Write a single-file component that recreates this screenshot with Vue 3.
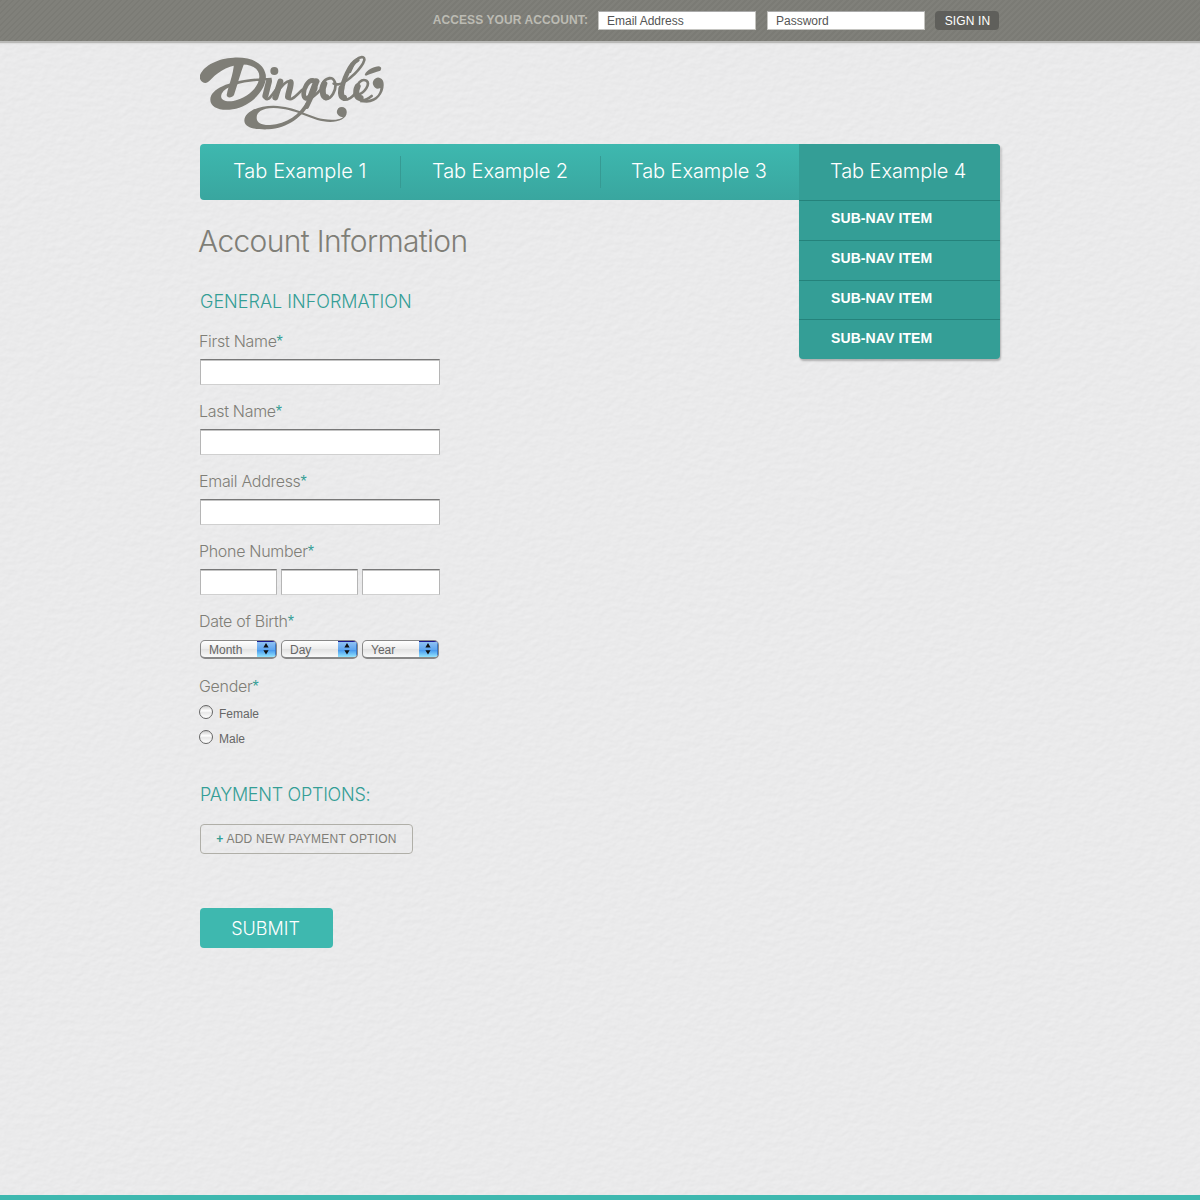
<script setup>
const tabs = ['Tab Example 1', 'Tab Example 2', 'Tab Example 3', 'Tab Example 4']
const subItems = [1, 2, 3, 4]
const fields = ['First Name', 'Last Name', 'Email Address']
const dates = ['Month', 'Day', 'Year']
const genders = ['Female', 'Male']
</script>

<template>
  <div class="page">
    <svg class="paper" width="1200" height="1200" aria-hidden="true">
      <filter id="grain" x="0" y="0" width="100%" height="100%" color-interpolation-filters="sRGB">
        <feTurbulence type="fractalNoise" baseFrequency="0.13 0.18" numOctaves="4" seed="8" result="n" />
        <feDiffuseLighting in="n" surfaceScale="0.15" diffuseConstant="1.02" lighting-color="#f0f0f1">
          <feDistantLight azimuth="240" elevation="73" />
        </feDiffuseLighting>
      </filter>
      <rect width="1200" height="1200" filter="url(#grain)" />
    </svg>

    <div class="topbar">
      <div class="wrap login">
        <span class="access">ACCESS YOUR ACCOUNT:</span>
        <div class="login-input">Email Address</div>
        <div class="login-input second">Password</div>
        <button class="signin">SIGN IN</button>
      </div>
    </div>

    <main class="wrap">
      <svg class="logo" viewBox="30 30 555 225" width="185" height="75" role="img" aria-label="Dingolé">
        <g fill="#7f7e77">
          <path d="M45 114C33 112 26 101 31 88C43 61 85 40 130 38C184 35 220 54 227 88C234 128 188 183 128 193C90 199 60 187 61 163C63 128 130 101 245 98L245 106C180 106 110 118 95 146C88 165 105 172 130 168C174 159 208 126 208 94C208 72 185 56 150 59C107 62 77 87 57 109Q50 115 45 114Z" />
          <path d="M132 54L163 54C151 85 142 122 132 150C127 158 111 161 110 150C116 120 130 90 132 54Z" />
          <circle cx="253" cy="78" r="12" />
          <path d="M469 194C478 224 437 236 400 229C350 220 320 192 250 189C216 190 200 200 200 219C200 233 215 241 240 240C290 236 330 210 352 164L364 168C340 215 292 250 235 253C203 254 164 251 163 227C163 203 200 182 250 182C320 184 350 213 400 222C432 228 455 222 460 215A15 15 0 1 1 469 194Z" />
          <path d="M524 90C529 75 552 64 567 64Q578 67 571 77C558 81 542 85 528 92Z" />
          <path d="M550 121A15 15 0 1 1 579 107C588 132 568 173 530 173L510 172L512 165C550 168 570 152 571 129Q557 136 550 121Z" />
        </g>
        <g fill="none" stroke="#7f7e77" stroke-linecap="round" stroke-linejoin="round">
          <path stroke-width="18" d="M237 109L226 153M271 110L256 157M302 112C304 122 295 142 294 155M379 109L362 153M454 130Q450 157 462 158M503 124C494 142 500 160 512 159M403 116C395 135 397 156 409 157" />
          <path stroke-width="14" d="M368 107C355 104 341 130 341 146C341 160 350 164 358 156M376 130L350 185M455 136C458 110 480 55 502 45" />
          <path stroke-width="8" d="M226 160C235 170 250 145 262 128M258 148C272 125 290 106 303 108M294 160C305 170 320 150 336 135M384 110C374 102 365 101 357 108M352 160Q370 150 380 118M358 163Q385 145 398 125M420 100C405 99 395 115 392 130M405 162C424 164 441 135 435 112Q430 98 418 99M431 116Q445 123 468 108C505 82 534 42 519 37C503 32 490 55 480 80M462 164Q480 165 496 145M503 150C525 143 542 116 529 107C514 99 500 118 498 132M510 165Q525 169 545 153" />
        </g>
      </svg>

      <nav class="nav">
        <div v-for="(t, i) in tabs" :key="t" class="tab" :class="{ active: i === 3 }">
          <span>{{ t }}</span>
          <ul v-if="i === 3" class="sub">
            <li v-for="s in subItems" :key="s">SUB-NAV ITEM</li>
          </ul>
        </div>
      </nav>

      <h1>Account Information</h1>
      <h2 class="general">GENERAL INFORMATION</h2>

      <div v-for="f in fields" :key="f" class="field">
        <label>{{ f }}<b>*</b></label>
        <div class="input"></div>
      </div>
      <div class="field">
        <label>Phone Number<b>*</b></label>
        <div class="row">
          <div class="input"></div><div class="input"></div><div class="input last"></div>
        </div>
      </div>
      <div class="field dob">
        <label>Date of Birth<b>*</b></label>
        <div class="row">
          <div v-for="d in dates" :key="d" class="select">
            <span>{{ d }}</span>
            <i><svg width="6" height="12" viewBox="0 0 6 12"><path d="M3 0L5.6 4.4H.4ZM3 11.6L5.6 7.2H.4Z" fill="#111" /></svg></i>
          </div>
        </div>
      </div>
      <div class="field gender">
        <label>Gender<b>*</b></label>
        <div v-for="g in genders" :key="g" class="radio"><i></i><span>{{ g }}</span></div>
      </div>

      <h2 class="payment">PAYMENT OPTIONS:</h2>
      <button class="add"><b>+</b> ADD NEW PAYMENT OPTION</button>
      <button class="submit">SUBMIT</button>
    </main>
    <div class="bottom"></div>
  </div>
</template>

<style>
body { margin: 0; }
</style>

<style scoped>
* { box-sizing: border-box; }
.page {
  position: relative;
  display: flex;
  flex-direction: column;
  width: 1200px;
  height: 1200px;
  overflow: hidden;
  background: #eaeaea;
  font-family: "Liberation Sans", Arial, sans-serif;
  color: #7f7e77;
}
.paper { position: absolute; inset: 0; }
.topbar, main, .bottom { position: relative; }
.topbar {
  flex: none;
  height: 43px;
  border-bottom: 2px solid #b9b9b7;
  background: repeating-linear-gradient(135deg, #7b7b75 0 2.1px, #80807a 2.1px 4.243px);
  box-shadow: 0 1px 1px #ddd;
}
.wrap { width: 800px; margin: 0 auto; }
.login { display: flex; justify-content: flex-end; padding: 11px 1px 0 0; }
.access { font-size: 12px; line-height: 18px; font-weight: bold; color: #bcbbb3; margin-right: 10px; letter-spacing: 0.1px; white-space: nowrap; }
.login-input { width: 158px; height: 19px; background: #fff; border: 1px solid #c4c4c0; border-top-color: #aaa; font-size: 12px; line-height: 18px; padding-left: 8px; color: #555; }
.second { margin-left: 11px; }
button { font-family: inherit; padding: 0; border: 0; display: block; white-space: nowrap; }
.signin { margin-left: 10px; width: 64px; height: 19px; border-radius: 4px; background: #5f5f5b; color: #fff; font-size: 12px; line-height: 20px; letter-spacing: 0.15px; padding-left: 1px; }
.logo { display: block; margin-top: 12px; }
.nav { display: flex; height: 56px; margin-top: 14px; border-radius: 4px; background: linear-gradient(#3eb8af, #39a69f); }
.tab { position: relative; width: 200px; padding-left: 33px; font: 300 20px/54px Inter, sans-serif; letter-spacing: -0.08px; color: #fff; white-space: nowrap; }
.tab:nth-child(1) { letter-spacing: 0.06px; }
.tab:nth-child(2) { width: 200px; padding-left: 32px; }
.tab:nth-child(3) { width: 199px; padding-left: 31px; }
.tab:nth-child(2)::before, .tab:nth-child(3)::before { content: ""; position: absolute; left: 0; top: 12px; width: 1px; height: 32px; background: #369a93; }
.tab.active { width: 201px; padding-left: 31px; background: #349e96; border-radius: 0 4px 0 0; box-shadow: 2px 2px 2px rgba(0, 0, 0, .15); }
.sub { position: absolute; left: 0; top: 56px; width: 201px; height: 159px; margin: 0; padding: 0; list-style: none; background: #349e96; border-radius: 0 0 4px 4px; box-shadow: 1px 2px 2px rgba(0, 0, 0, .25); }
.sub li { height: 40px; border-top: 1px solid #25827b; padding-left: 32px; font: bold 14px/35px "Liberation Sans", sans-serif; letter-spacing: 0.1px; }
.sub li:nth-child(3) { height: 39px; }
.sub li:nth-child(4) { line-height: 37px; }
h1 { font: 300 30px/40px Inter, sans-serif; letter-spacing: -0.67px; margin: 21px 0 0 -2px; white-space: nowrap; }
h2 { font: 300 18px/24px Inter, sans-serif; color: #349e96; margin: 0; }
.general { margin-top: 29px; }
.field { height: 70px; padding-top: 15px; }
label { display: block; font: 300 16px/24px Inter, sans-serif; letter-spacing: -0.3px; height: 30px; margin-left: -1px; }
label b { font: 400 16px/20px "Liberation Sans", sans-serif; color: #349e96; }
.input { width: 240px; height: 26px; background: #fff; border: 1px solid #b5b5b5; border-top-color: #777; border-bottom-color: #d0d0d0; box-shadow: inset 0 1px 0 #c4c4c4; }
.row { display: flex; gap: 4px; }
.row .input { width: 77px; }
.row .input.last { width: 78px; }
.dob label { height: 31px; }
.select { width: 77px; height: 19px; border: 1px solid #888; border-bottom: 2px solid #888; border-radius: 5px; background: linear-gradient(#fff, #ececec 50%, #e2e2e2 51%, #fafafa); display: flex; justify-content: space-between; overflow: hidden; font-size: 12px; line-height: 18px; padding-left: 8px; color: #666; }
.select i { width: 19px; height: 18px; margin-top: -1px; border-top: 2px solid #1b1b90; border-right: 1px solid #3a78c8; background: linear-gradient(#8fc0f2, #5fa6f0 48%, #4597ee 50%, #9ff0ff); display: flex; justify-content: center; padding-top: 1px; }
.gender { height: 119px; padding-top: 10px; }
.gender label { height: 31px; }
.radio { display: flex; height: 25px; align-items: flex-start; font-size: 12px; line-height: 18px; color: #666; }
.radio i { width: 14px; height: 14px; margin: 0 6px 0 -1px; border: 1px solid #666; border-radius: 50%; background: linear-gradient(#ccc, #fff 40%, #e8e8e8 55%, #fff); }
.payment { letter-spacing: -0.28px; }
.add { margin-top: 17px; width: 213px; height: 30px; border: 1px solid #b0afa8; border-radius: 4px; background: transparent; color: #7f7e77; font-size: 12px; letter-spacing: 0.22px; }
.add b { color: #349e96; }
.submit { margin-top: 54px; width: 133px; height: 40px; padding-right: 2px; border-radius: 4px; background: #3eb8af; color: #fff; font: 300 18px Inter, sans-serif; }
.bottom { margin-top: auto; flex: none; height: 5px; background: #3eb8af; }
</style>
